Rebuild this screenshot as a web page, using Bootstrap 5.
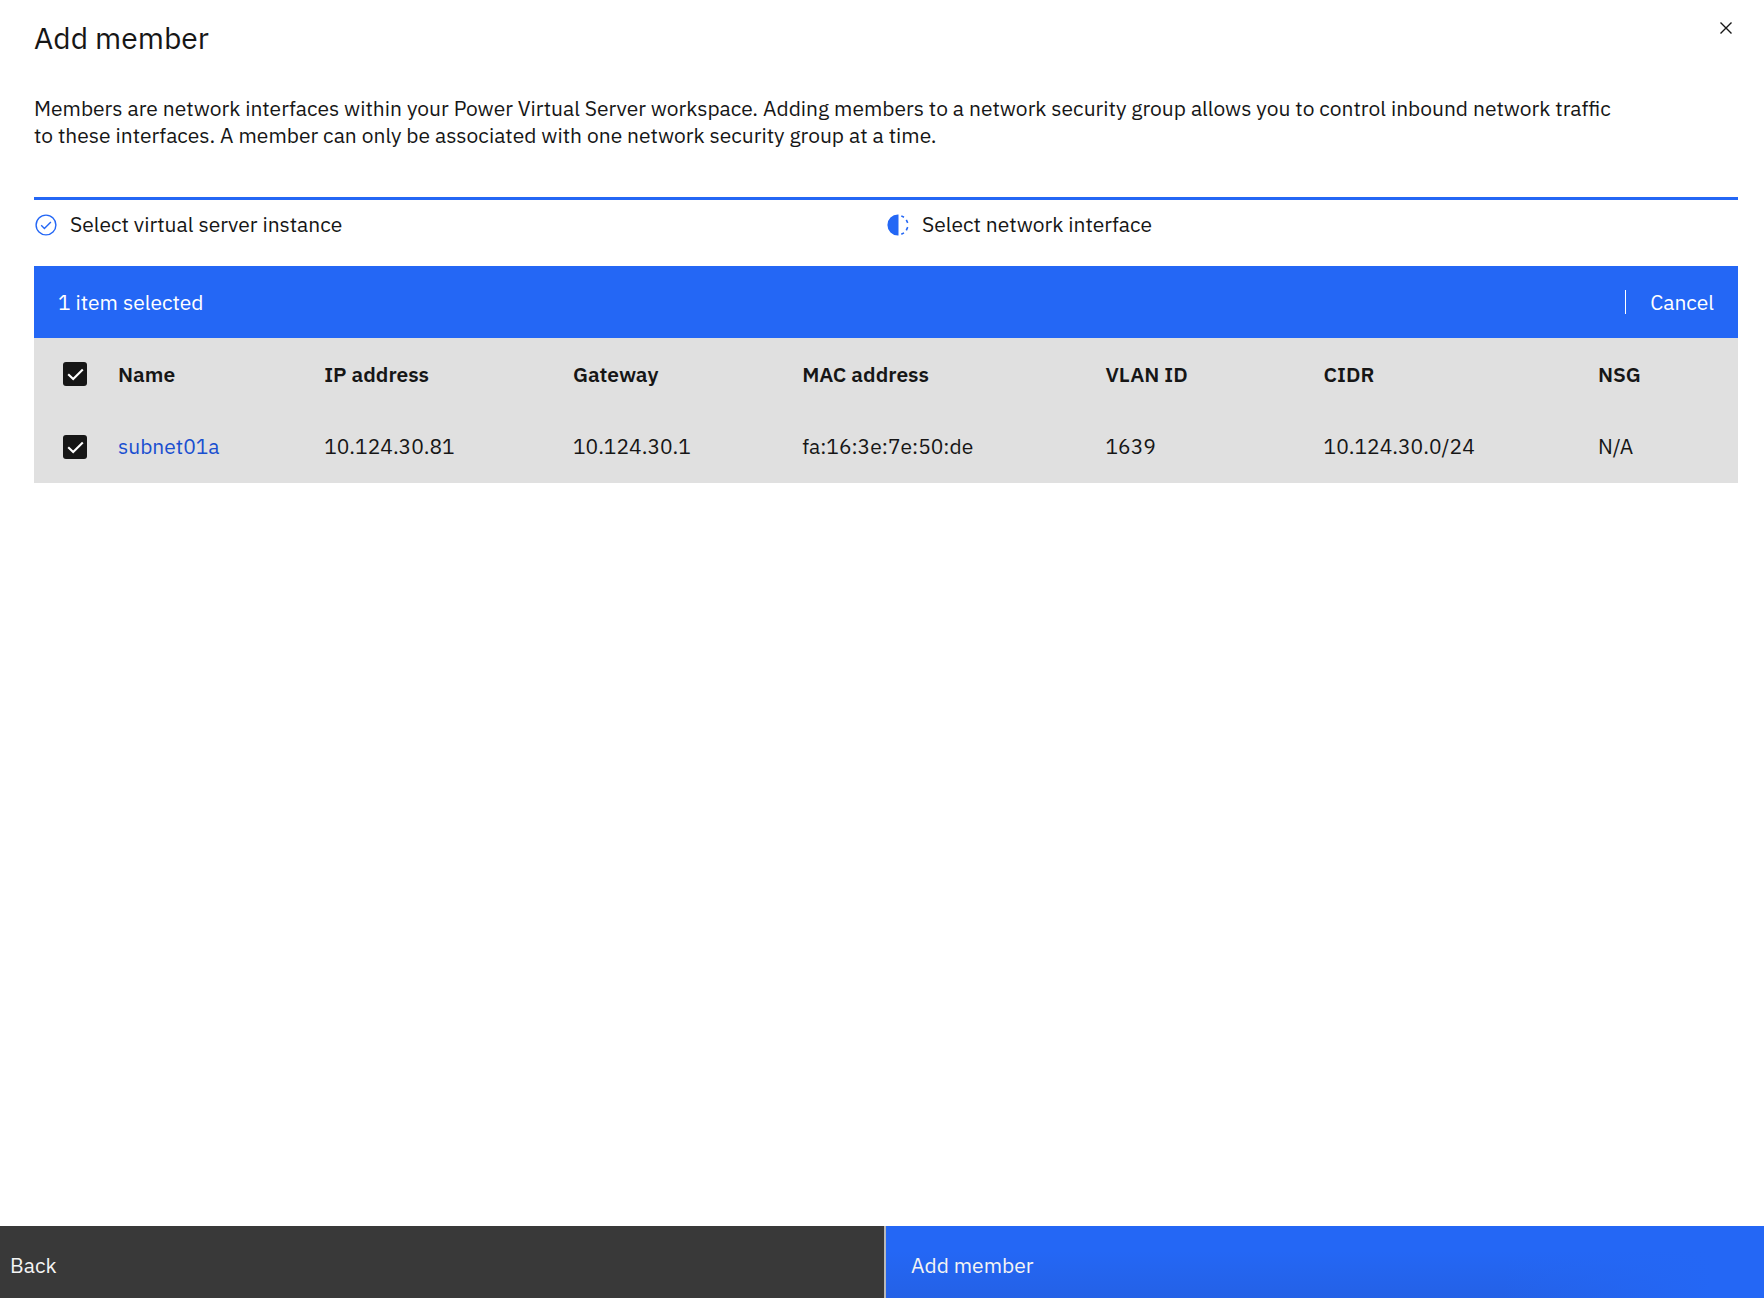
<!DOCTYPE html>
<html lang="en">
<head>
<meta charset="utf-8">
<meta name="viewport" content="width=device-width, initial-scale=1">
<title>Add member</title>
<link href="https://cdn.jsdelivr.net/npm/bootstrap@5.3.0/dist/css/bootstrap.min.css" rel="stylesheet">
<style>
  :root { --ink: #161616; --brand: #2467f5; --layer: #e0e0e0; }
  body { font-family: "IBM Plex Sans", "Noto Sans", sans-serif; font-size: 21px; line-height: 27px; color: var(--ink); background: #fff; }
  .panel-body { padding: 18px 26px 0 34px; }
  .panel-title { font-size: 30px; line-height: 40px; font-weight: 400; }
  .close-btn { width: 36px; height: 36px; margin-right: -6px; margin-top: -8px; color: var(--ink); }
  .intro { margin-top: 37px; margin-bottom: 48px; padding-right: 112px; }
  .steps { border-top: 3px solid var(--brand); padding-top: 11px; margin-bottom: 28px; }
  .steps svg { width: 24px; height: 24px; color: var(--brand); }
  .steps li { height: 27px; }
  .batch-bar { height: 72px; background: var(--brand); color: #fff; padding-left: 24px; }
  .batch-bar .btn { font-size: 21px; line-height: 24px; color: #fff; border: 0; border-left: 1px solid #fff; border-radius: 0; padding: 0 24px; }
  .iface-table { --bs-table-bg: var(--layer); --bs-table-color: var(--ink); table-layout: fixed; margin: 0; }
  .iface-table > :not(caption) > * > * { border: 0; height: 72px; padding: 0 0 0 24px; vertical-align: middle; color: var(--ink); }
  .iface-table tbody > tr > * { height: 73px !important; }
  .iface-table > :not(caption) > * > .pick { padding-left: 29px; }
  .iface-table th { font-weight: 600; }
  .iface-table a { color: #1a4fd0; text-decoration: none; }
  .pick .form-check-input { width: 24px; height: 24px; border-radius: 3px; margin: 0; display: block; border: 0; }
  .pick .form-check-input:checked { background-color: var(--ink); background-size: 24px 24px;
    background-image: url("data:image/svg+xml,%3Csvg xmlns='http://www.w3.org/2000/svg' viewBox='0 0 24 24'%3E%3Cpath d='M5.2 12.2l5 4.9L19.8 7.6' fill='none' stroke='%23fff' stroke-width='2.1'/%3E%3C/svg%3E"); }
  .action-set .btn { height: 72px; font-size: 21px; border: 0; border-radius: 0; color: #f4f4f4; text-align: left; padding: 7px 12px 0 10px; }
  .action-set .btn-back { background: #393939; width: calc(50% + 2px); }
  .action-set .btn-add { flex: 1; background: linear-gradient(to right, transparent 70%, var(--brand) 94%), linear-gradient(to bottom, var(--brand) 35%, #2461e6); border-left: 2px solid #b8b8b8; padding-left: 25px; }
</style>
</head>
<body>
<div class="d-flex flex-column min-vh-100">
  <main class="panel-body flex-grow-1">
    <header class="d-flex justify-content-between align-items-start">
      <h1 class="panel-title mb-0">Add member</h1>
      <button type="button" class="close-btn btn p-0 border-0 d-flex align-items-center justify-content-center" aria-label="Close">
        <svg width="12" height="12" viewBox="0 0 12 12" fill="none" stroke="currentColor" stroke-width="1.4" aria-hidden="true"><path d="M.5.5l11 11M11.5.5l-11 11"/></svg>
      </button>
    </header>
    <p class="intro">Members are network interfaces within your Power Virtual Server workspace. Adding members to a network security group allows you to control inbound network traffic to these interfaces. A member can only be associated with one network security group at a time.</p>

    <ol class="steps list-unstyled d-flex">
      <li class="w-50 d-flex align-items-center">
        <svg viewBox="0 0 24 24" fill="none" stroke="currentColor" stroke-width="1.4" aria-hidden="true"><circle cx="12" cy="12" r="9.9"/><path d="M7.2 12.3l3.2 3.1 6.5-6.5"/></svg>
        <span class="ms-2 ps-1">Select virtual server instance</span>
      </li>
      <li class="w-50 d-flex align-items-center" aria-current="step">
        <svg viewBox="0 0 24 24" fill="none" aria-hidden="true"><path d="M12.5 1.5v21h-.6a10.5 10.5 0 0 1 0-21z" fill="currentColor"/><path d="M15.3 2.9l2.7 1.3M20.3 6.9l1.4 3M21.7 14.2l-1.4 3.1M18 19.9l-2.7 1.3" stroke="currentColor" stroke-width="1.6"/></svg>
        <span class="ms-2 ps-1">Select network interface</span>
      </li>
    </ol>

    <div class="batch-bar d-flex align-items-center justify-content-between">
      <span>1 item selected</span>
      <button type="button" class="btn">Cancel</button>
    </div>
    <table class="table iface-table">
      <colgroup>
        <col style="width:60px"><col style="width:12.1%"><col style="width:14.6%"><col style="width:13.45%"><col style="width:17.8%"><col style="width:12.8%"><col style="width:16.1%"><col>
      </colgroup>
      <thead>
        <tr>
          <th scope="col" class="pick"><input class="form-check-input" type="checkbox" checked aria-label="Select all rows"></th>
          <th scope="col">Name</th><th scope="col">IP address</th><th scope="col">Gateway</th><th scope="col">MAC address</th><th scope="col">VLAN ID</th><th scope="col">CIDR</th><th scope="col">NSG</th>
        </tr>
      </thead>
      <tbody>
        <tr>
          <td class="pick"><input class="form-check-input" type="checkbox" checked aria-label="Select subnet01a"></td>
          <td><a href="#">subnet01a</a></td><td>10.124.30.81</td><td>10.124.30.1</td><td>fa:16:3e:7e:50:de</td><td>1639</td><td>10.124.30.0/24</td><td>N/A</td>
        </tr>
      </tbody>
    </table>
  </main>
  <footer class="action-set d-flex">
    <button type="button" class="btn btn-back">Back</button>
    <button type="button" class="btn btn-add">Add member</button>
  </footer>
</div>
<script src="https://cdn.jsdelivr.net/npm/bootstrap@5.3.0/dist/js/bootstrap.bundle.min.js"></script>
</body>
</html>
